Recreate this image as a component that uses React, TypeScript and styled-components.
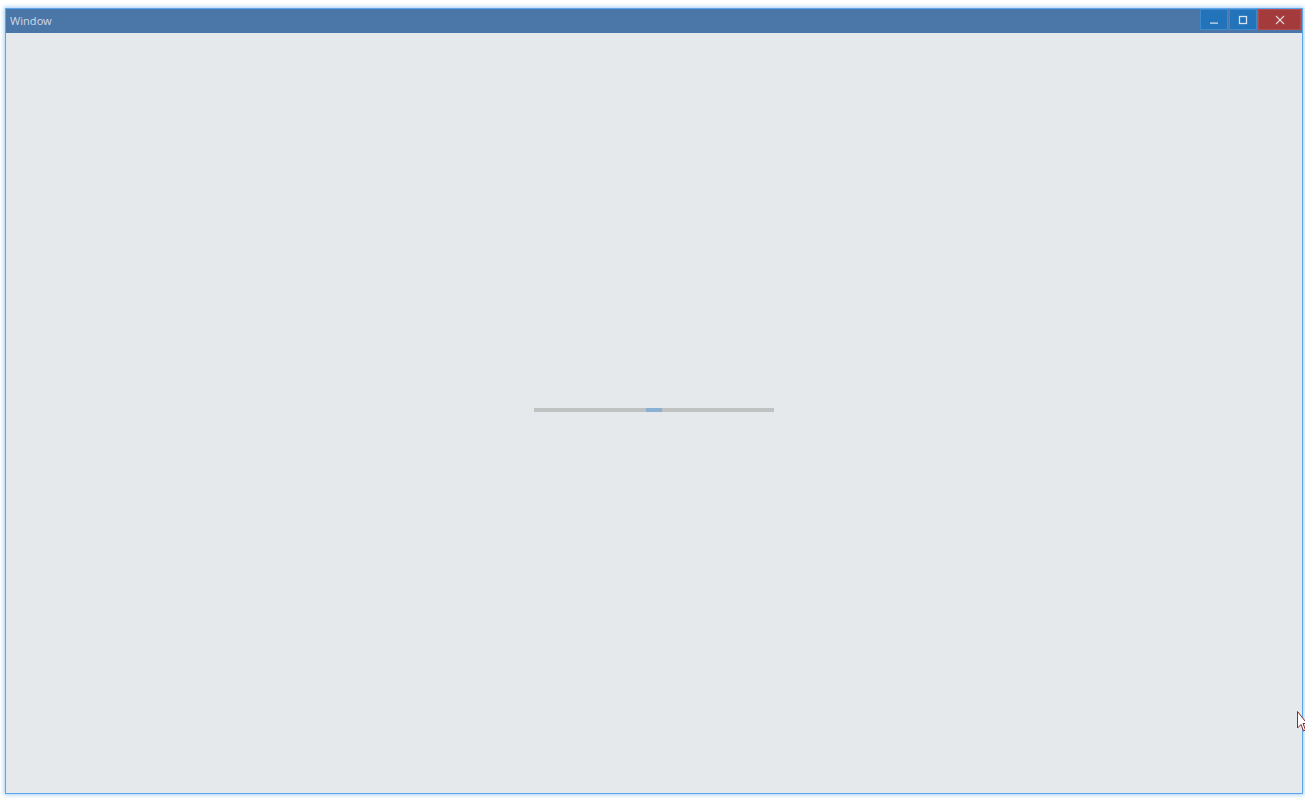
import React from "react";
import styled, { createGlobalStyle } from "styled-components";

const Global = createGlobalStyle`
  html, body { margin: 0; padding: 0; background: #ffffff; }
  body { font-family: "Segoe UI", "Noto Sans", "Liberation Sans", sans-serif; }
`;

const Page = styled.div`
  width: 1305px;
  height: 802px;
  position: relative;
  overflow: hidden;
  padding: 8px 0 0 5px;
  box-sizing: border-box;
`;

const Window = styled.div`
  width: 1298px;
  height: 786px;
  box-sizing: border-box;
  border: 1px solid #5aa5ec;
  box-shadow: 0 0 4px 1px rgba(90, 165, 236, 0.55);
  display: flex;
  flex-direction: column;
  background: #e5e9ec;
`;

const TitleBar = styled.div`
  height: 24px;
  flex: none;
  background: #4a76a8;
  display: flex;
  align-items: flex-start;
  justify-content: space-between;
`;

const Title = styled.div`
  color: #c9d5e3;
  font-size: 11px;
  line-height: 24px;
  padding-left: 4px;
  font-family: "Noto Sans", "Liberation Sans", sans-serif;
`;

const Controls = styled.div`
  display: flex;
  gap: 1px;
  padding-right: 1px;
`;

const CtrlButton = styled.div<{ $w: number; $bg: string; $bd: string }>`
  width: ${(p) => p.$w}px;
  height: 21px;
  box-sizing: border-box;
  background: ${(p) => p.$bg};
  border: 1px solid ${(p) => p.$bd};
  display: flex;
  align-items: center;
  justify-content: center;
`;

const Content = styled.div`
  flex: 1;
  display: flex;
  align-items: center;
  justify-content: center;
  padding-bottom: 7px;
`;

const Track = styled.div`
  width: 240px;
  height: 4px;
  background: #c0c2c2;
  display: flex;
  justify-content: center;
`;

const Indicator = styled.div`
  width: 16px;
  height: 4px;
  background: #8ab0d4;
`;

const Cursor = styled.svg`
  position: absolute;
  left: 1297px;
  top: 711px;
`;

export default function App() {
  return (
    <>
      <Global />
      <Page>
        <Window>
          <TitleBar>
            <Title>Window</Title>
            <Controls>
              <CtrlButton $w={28} $bg="#2373bb" $bd="#3f88c9">
                <svg width="10" height="10" viewBox="0 0 10 10">
                  <rect x="1" y="7.5" width="8" height="1.2" fill="#d6e4f2" />
                </svg>
              </CtrlButton>
              <CtrlButton $w={28} $bg="#2373bb" $bd="#3f88c9">
                <svg width="10" height="10" viewBox="0 0 10 10">
                  <rect x="1.5" y="1.5" width="7" height="7" fill="none" stroke="#d6e4f2" strokeWidth="1.3" />
                </svg>
              </CtrlButton>
              <CtrlButton $w={43} $bg="#a33b3c" $bd="#b34c4c">
                <svg width="10" height="10" viewBox="0 0 10 10">
                  <path d="M1 1 L9 9 M9 1 L1 9" stroke="#e6d5d5" strokeWidth="1.1" />
                </svg>
              </CtrlButton>
            </Controls>
          </TitleBar>
          <Content>
            <Track>
              <Indicator />
            </Track>
          </Content>
        </Window>
        <Cursor width="10" height="22" viewBox="0 0 10 22">
          <path d="M0.5 0.5 L0.5 17 L4 13.5 L6.5 20 L8.5 19 L6 12.5 L10 12.5 Z" fill="#ffffff" stroke="#8a2a2a" strokeWidth="1" />
        </Cursor>
      </Page>
    </>
  );
}
